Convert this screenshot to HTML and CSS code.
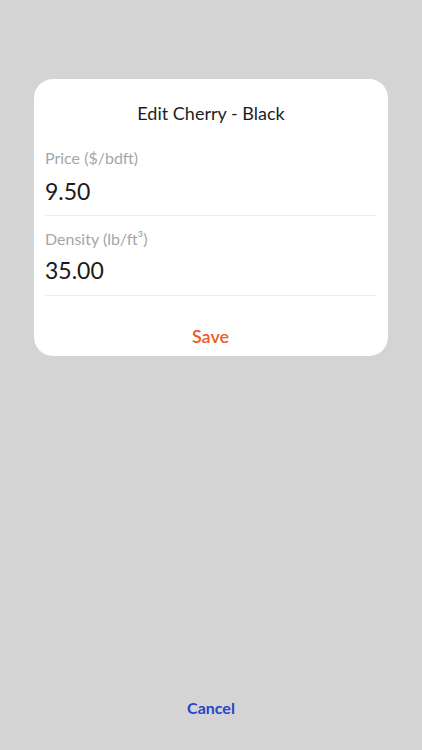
FILE: index.html
```html
<!DOCTYPE html>
<html>
<head>
<meta charset="utf-8">
<link rel="stylesheet" href="styles.css">
</head>
<body>
<div class="screen">
  <div class="card">
    <div class="title">Edit Cherry - Black</div>
    <div class="field first">
      <div class="label">Price ($/bdft)</div>
      <div class="value">9.50</div>
    </div>
    <div class="field second">
      <div class="label">Density (lb/ft³)</div>
      <div class="value">35.00</div>
    </div>
    <div class="save">Save</div>
  </div>
  <div class="spacer"></div>
  <div class="cancel">Cancel</div>
</div>
</body>
</html>
```
FILE: styles.css
```css
html, body {
  margin: 0;
  padding: 0;
  height: 100%;
}
body {
  background: #d4d4d5;
  font-family: Lato, "Noto Sans", sans-serif;
}
.screen {
  height: 750px;
  display: flex;
  flex-direction: column;
  align-items: center;
}
.card {
  margin-top: 79px;
  width: 354px;
  height: 277px;
  box-sizing: border-box;
  background: #ffffff;
  border-radius: 19px;
  padding: 0 12px 0 11px;
  display: flex;
  flex-direction: column;
}
.title {
  text-align: center;
  font-size: 18px;
  color: #1d1d1f;
  padding-top: 22px;
  height: 24px;
  line-height: 24px;
  margin-left: 1px;
}
.field {
  border-bottom: 1px solid #ededed;
  box-sizing: border-box;
}
.field.first {
  padding-top: 23px;
  height: 91px;
}
.field.second {
  padding-top: 13px;
  height: 80px;
}
.label {
  font-size: 16px;
  color: #a6a6a8;
  line-height: 20px;
}
.value {
  font-size: 23px;
  color: #1a1a1a;
  line-height: 28px;
}
.first .value {
  margin-top: 9px;
}
.second .value {
  margin-top: 7px;
}
.save {
  text-align: center;
  color: #f0592a;
  font-size: 18px;
  font-weight: 600;
  margin-top: 29px;
  line-height: 22px;
}
.spacer {
  flex: 1;
}
.cancel {
  color: #2744c9;
  font-size: 16px;
  font-weight: 700;
  line-height: 20px;
  margin-bottom: 32px;
}
```
